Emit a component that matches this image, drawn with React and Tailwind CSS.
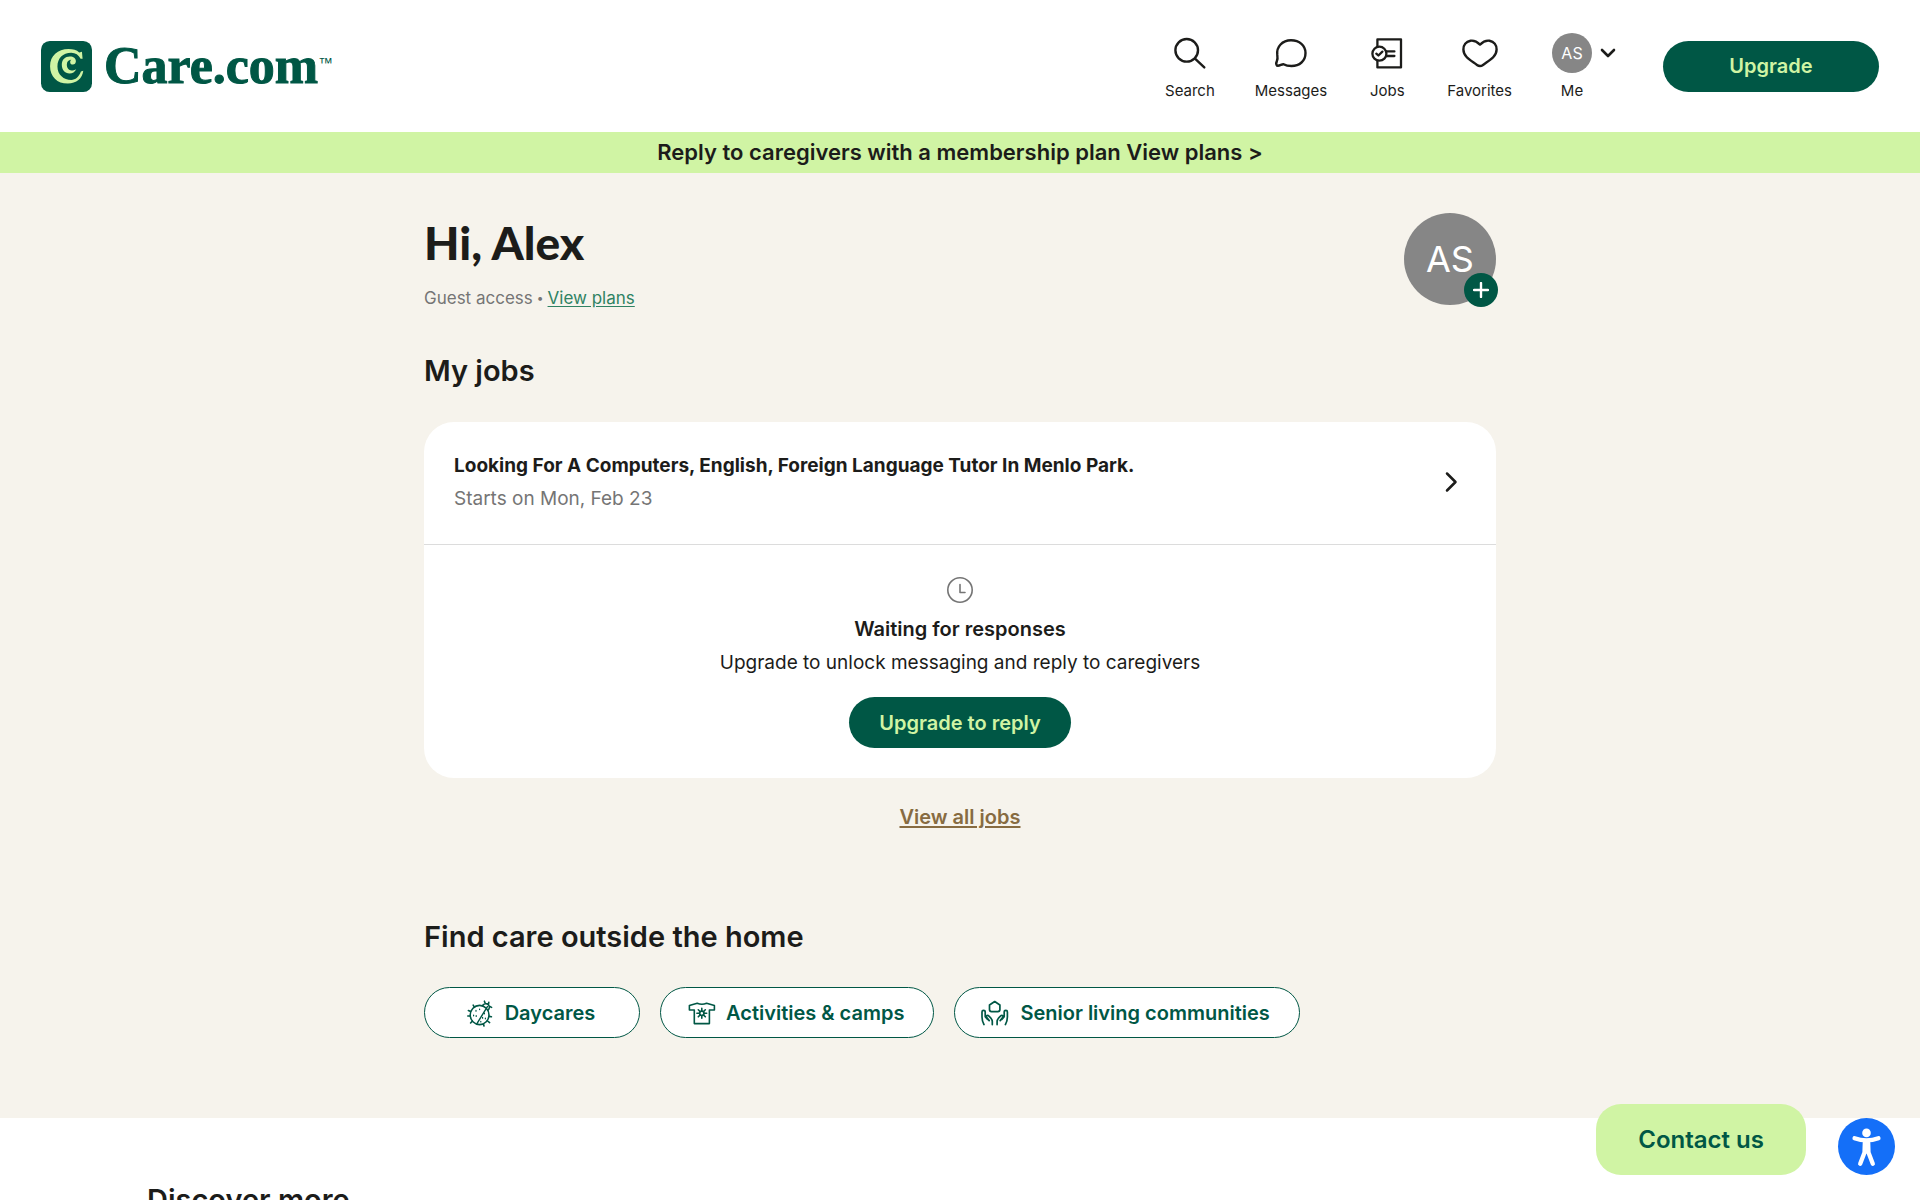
import React from "react";

const stroke = {
  fill: "none",
  stroke: "currentColor",
  strokeLinecap: "round",
  strokeLinejoin: "round",
};

function LogoMark() {
  return (
    <svg viewBox="0 0 152 152" className="size-[51px] shrink-0" aria-hidden="true">
      <rect width="152" height="152" rx="26" fill="#005745" />
      <path
        fill="#d0f4a4"
        d="M122 32 L124 53 L118 53 C112 41 103 35 90 35 C65 35 49 52 49 76 C49 101 68 116 90 116 C103 116 113 107 119 91 L126 89 C123 112 106 127 80 127 C48 127 27 106 27 75 C27 44 50 24 82 24 C96 24 106 27 114 34 Z"
      />
      <path
        fill="#d0f4a4"
        d="M105 84 C101 92 94 97 85 97 C71 97 62 86 62 71 C62 55 72 46 86 46 C97 46 104 52 104 60 C104 66 100 70 95 70 C90 70 87 67 87 63 C87 60 88 57 91 56 C82 55 77 62 77 71 C77 81 83 88 91 88 C96 88 101 86 105 84 Z"
      />
    </svg>
  );
}

function SearchIcon() {
  return (
    <svg viewBox="0 0 40 40" className="size-10" strokeWidth="2.4" {...stroke} aria-hidden="true">
      <circle cx="16.7" cy="17.3" r="11.3" />
      <path d="M25 25.6 34.3 34.4" />
    </svg>
  );
}

function MessagesIcon() {
  return (
    <svg viewBox="0 0 40 40" className="size-10" strokeWidth="2.4" {...stroke} aria-hidden="true">
      <path d="M6 32.6C5 31.5 5 30 5.8 28.4C6.8 26.3 6.7 24.5 6.3 22C5.2 13.5 11.5 7.3 20 7.3C28.5 7.3 34.5 12.5 34.5 20C34.5 28 28.5 33 20.5 33C17.5 33 14.5 32.3 12.5 31.2C10.5 31 8.5 33.3 6 32.6Z" />
    </svg>
  );
}

function JobsIcon() {
  return (
    <svg viewBox="0 0 40 40" className="size-10" strokeWidth="2.3" {...stroke} aria-hidden="true">
      <rect x="10.4" y="6.4" width="23.6" height="28" />
      <circle cx="12.4" cy="20.7" r="7" fill="#fff" />
      <path d="M19.5 18.4H27.4M19.5 23H27.4M9.3 20.7 11.4 22.5 15.4 18.6" />
    </svg>
  );
}

function FavoritesIcon() {
  return (
    <svg viewBox="0 0 40 40" className="size-10" strokeWidth="2.4" {...stroke} aria-hidden="true">
      <path d="M20 11.6C16.5 8 13 7.3 10.5 7.7C6 8.5 3.3 12 3.4 16.5C3.5 24 11 27.5 17 32C19.2 33.6 20.8 33.6 23 32C29 27.5 36.5 24 36.6 16.5C36.7 12 34 8.5 29.5 7.7C27 7.3 23.5 8 20 11.6Z" />
    </svg>
  );
}

function LadybugIcon() {
  return (
    <svg viewBox="0 0 30 30" className="size-[30px] shrink-0" strokeWidth="1.6" {...stroke} aria-hidden="true">
      <ellipse cx="14.6" cy="17" rx="9.4" ry="9.6" />
      <path d="M22.4 8.6 11.8 25.8" strokeWidth="1.4" />
      <path d="M17.6 7.6C18.4 5.4 21.8 5 23.4 6.8C24.8 8.6 24.4 11 23 12.2M20.3 5.6 19.4 3.2M23.4 6.8 23.8 4.4M24.4 8.2 26.6 9.4" />
      <path d="M5.6 13.6 3.4 12.6M5.2 18H2.8M7.2 23.2 5.6 25M24 18.4 26.4 18.8M22.6 23 24.6 24.6M18.4 25.8 19 28M9.4 9.2 8.2 7.2" />
      <path d="M11 12.4V13.2M14.6 11V11.6M8.6 17V17.8M19.4 15V15.8M17.6 19.4V20.2M20.4 20.2V20.8M15.8 23.4V24M11.2 17.6V18.4" strokeWidth="1.2" />
    </svg>
  );
}

function ShirtIcon() {
  return (
    <svg viewBox="0 0 30 30" className="size-[30px] shrink-0" strokeWidth="1.6" {...stroke} aria-hidden="true">
      <path d="M8.3 12H3.4V7.6L11.2 5.2C13.8 6.4 18 6.4 20.6 5.2L28.4 7.6V12H23.4V25.6H8.3Z" />
      <circle cx="15.8" cy="15.3" r="2.2" />
      <path d="M15.8 13.1V10.4M15.8 17.5V20.2M13.6 15.3H10.9M18 15.3H20.7M14.2 13.7 12.3 11.8M17.4 13.7 19.3 11.8M14.2 16.9 12.3 18.8M17.4 16.9 19.3 18.8" />
    </svg>
  );
}

function CareHandsIcon() {
  return (
    <svg viewBox="0 0 30 30" className="size-[30px] shrink-0" strokeWidth="1.7" {...stroke} aria-hidden="true">
      <path d="M14.7 3.5 19.9 7V11.6Q19.9 13.6 17.9 13.6H11.5Q9.5 13.6 9.5 11.6V7Z" />
      <path d="M4 26.6C2.6 24 2 21.5 2 19V14Q2 12.4 3.5 12.4Q5.2 12.4 5.2 14V18.6L7.6 21.4M12.3 26.6V23.4C12.3 21.4 9.6 18.4 8.2 17.5C6.8 17 5.9 18.2 6.6 19.4L9.2 22.6" />
      <path d="M25.4 26.6C26.8 24 27.4 21.5 27.4 19V14Q27.4 12.4 25.9 12.4Q24.2 12.4 24.2 14V18.6L21.8 21.4M17.1 26.6V23.4C17.1 21.4 19.8 18.4 21.2 17.5C22.6 17 23.5 18.2 22.8 19.4L20.2 22.6" />
    </svg>
  );
}

function NavItem({ label, icon }) {
  return (
    <a href="#" className="flex min-w-10 flex-col items-center gap-2">
      {icon}
      <span className="text-[15px] leading-5">{label}</span>
    </a>
  );
}

function Chip({ icon, children }) {
  return (
    <a
      href="#"
      className="flex h-[51px] min-w-[216px] items-center justify-center gap-[10px] rounded-full border border-[#005745] bg-white pr-[29px] pl-[25px] text-[20px] font-semibold text-[#005745]"
    >
      {icon}
      {children}
    </a>
  );
}

export default function App() {
  return (
    <div className="min-h-screen bg-white font-['Inter',sans-serif] text-[#1c1c1a]">
      <header className="flex h-[132px] items-center justify-between px-[41px]">
        <a href="#" className="flex items-center gap-3 text-[#005745]">
          <LogoMark />
          <span className="flex items-start">
            <span className="font-['Liberation_Serif',serif] text-[52px] leading-[48px] font-bold [-webkit-text-stroke:1px_#005745]">Care.com</span>
            <span className="font-['Liberation_Sans',sans-serif] text-[15px] leading-[42px]">™</span>
          </span>
        </a>
        <div className="flex items-center gap-[47px]">
          <nav className="flex items-start gap-10 pt-0.5">
            <NavItem label="Search" icon={<SearchIcon />} />
            <NavItem label="Messages" icon={<MessagesIcon />} />
            <NavItem label="Jobs" icon={<JobsIcon />} />
            <NavItem label="Favorites" icon={<FavoritesIcon />} />
            <button type="button" className="flex items-start gap-2">
              <span className="flex flex-col items-center gap-2">
                <span className="flex size-10 items-center justify-center rounded-full bg-[#868686] text-[16px] text-white">AS</span>
                <span className="text-[15px] leading-5">Me</span>
              </span>
              <svg viewBox="0 0 16 40" className="h-10 w-4" strokeWidth="2.6" {...stroke} aria-hidden="true">
                <path d="M2 17 8 23 14 17" />
              </svg>
            </button>
          </nav>
          <button type="button" className="h-[51px] w-[216px] rounded-full bg-[#005745] text-[20px] font-semibold text-[#d0f4a4]">
            Upgrade
          </button>
        </div>
      </header>

      <a href="#" className="flex h-[41px] items-center justify-center bg-[#d0f4a4] text-[22px] font-semibold">
        Reply to caregivers with a membership plan View plans &gt;
      </a>

      <main className="bg-[#f6f3ec] pt-10 pb-20">
        <div className="mx-auto max-w-[1072px]">
          <div className="flex items-start justify-between">
            <div>
              <h1 className="font-['Lato',sans-serif] text-[46px] leading-[60px] font-black">Hi, Alex</h1>
              <p className="mt-3 flex items-center gap-1 text-[17px] leading-[26px] text-[#757575]">
                Guest access <span className="text-[12px]">•</span>
                <a href="#" className="text-[#2f8263] underline underline-offset-2">View plans</a>
              </p>
            </div>
            <div className="relative flex size-[92px] items-center justify-center rounded-full bg-[#868686] text-[36px] text-white">
              AS
              <button
                type="button"
                aria-label="Add photo"
                className="absolute -right-0.5 -bottom-0.5 flex size-[34px] items-center justify-center rounded-full bg-[#005745]"
              >
                <svg viewBox="0 0 16 16" className="size-4" strokeWidth="2.4" {...stroke} aria-hidden="true">
                  <path d="M8 1V15M1 8H15" />
                </svg>
              </button>
            </div>
          </div>

          <h2 className="mt-10 text-[29px] leading-10 font-semibold">My jobs</h2>
          <section className="mt-[31px] rounded-[30px] bg-white">
            <a href="#" className="flex items-center justify-between border-b border-[#dcdcdc] px-[30px] pt-[27px] pb-[29px]">
              <div className="leading-[33px]">
                <h3 className="text-[19px] font-bold">
                  Looking For A Computers, English, Foreign Language Tutor In Menlo Park.
                </h3>
                <p className="text-[19px] text-[#757575]">Starts on Mon, Feb 23</p>
              </div>
              <svg viewBox="0 0 30 30" className="size-[30px]" strokeWidth="2.5" {...stroke} aria-hidden="true">
                <path d="M11 6.5 19.5 15 11 23.5" />
              </svg>
            </a>
            <div className="flex flex-col items-center py-[30px]">
              <svg viewBox="0 0 30 30" className="size-[30px] text-[#757575]" strokeWidth="1.6" {...stroke} aria-hidden="true">
                <circle cx="15" cy="15" r="12.2" />
                <path d="M15 9.5V17.5H20" />
              </svg>
              <h3 className="mt-2 text-[20px] leading-[33px] font-semibold">Waiting for responses</h3>
              <p className="text-[19px] leading-[33px]">Upgrade to unlock messaging and reply to caregivers</p>
              <button type="button" className="mt-[18px] h-[51px] rounded-full bg-[#005745] px-[30px] text-[20px] font-semibold text-[#d0f4a4]">
                Upgrade to reply
              </button>
            </div>
          </section>
          <div className="mt-[23px] text-center text-[20px] leading-[33px] font-semibold">
            <a href="#" className="text-[#876b41] underline underline-offset-2">View all jobs</a>
          </div>

          <h2 className="mt-[83px] text-[29px] leading-10 font-semibold">Find care outside the home</h2>
          <div className="mt-[30px] flex flex-wrap gap-5">
            <Chip icon={<LadybugIcon />}>Daycares</Chip>
            <Chip icon={<ShirtIcon />}>Activities &amp; camps</Chip>
            <Chip icon={<CareHandsIcon />}>Senior living communities</Chip>
          </div>
        </div>
      </main>

      <section className="mx-auto max-w-[1626px] pt-[62px]">
        <h2 className="text-[29px] leading-10 font-semibold">Discover more</h2>
      </section>

      <div className="fixed right-[25px] bottom-[25px] flex items-end gap-8">
        <button type="button" className="h-[71px] rounded-[25px] bg-[#d0f4a4] px-[42px] text-[24px] font-semibold text-[#005745]">
          Contact us
        </button>
        <button type="button" aria-label="Accessibility options" className="size-[57px] rounded-full bg-[#146ff8]">
          <svg viewBox="0 0 172 172" className="size-full" aria-hidden="true">
            <circle cx="86" cy="45" r="13" fill="#fff" />
            <g fill="none" stroke="#fff" strokeWidth="13" strokeLinecap="round" strokeLinejoin="round">
              <path d="M50 61 C74 70 98 70 122 61" />
              <path d="M67 138 L80 104 L81 74 H91 L92 104 L105 138" />
              <path d="M86 74 V100" />
            </g>
          </svg>
        </button>
      </div>
    </div>
  );
}
